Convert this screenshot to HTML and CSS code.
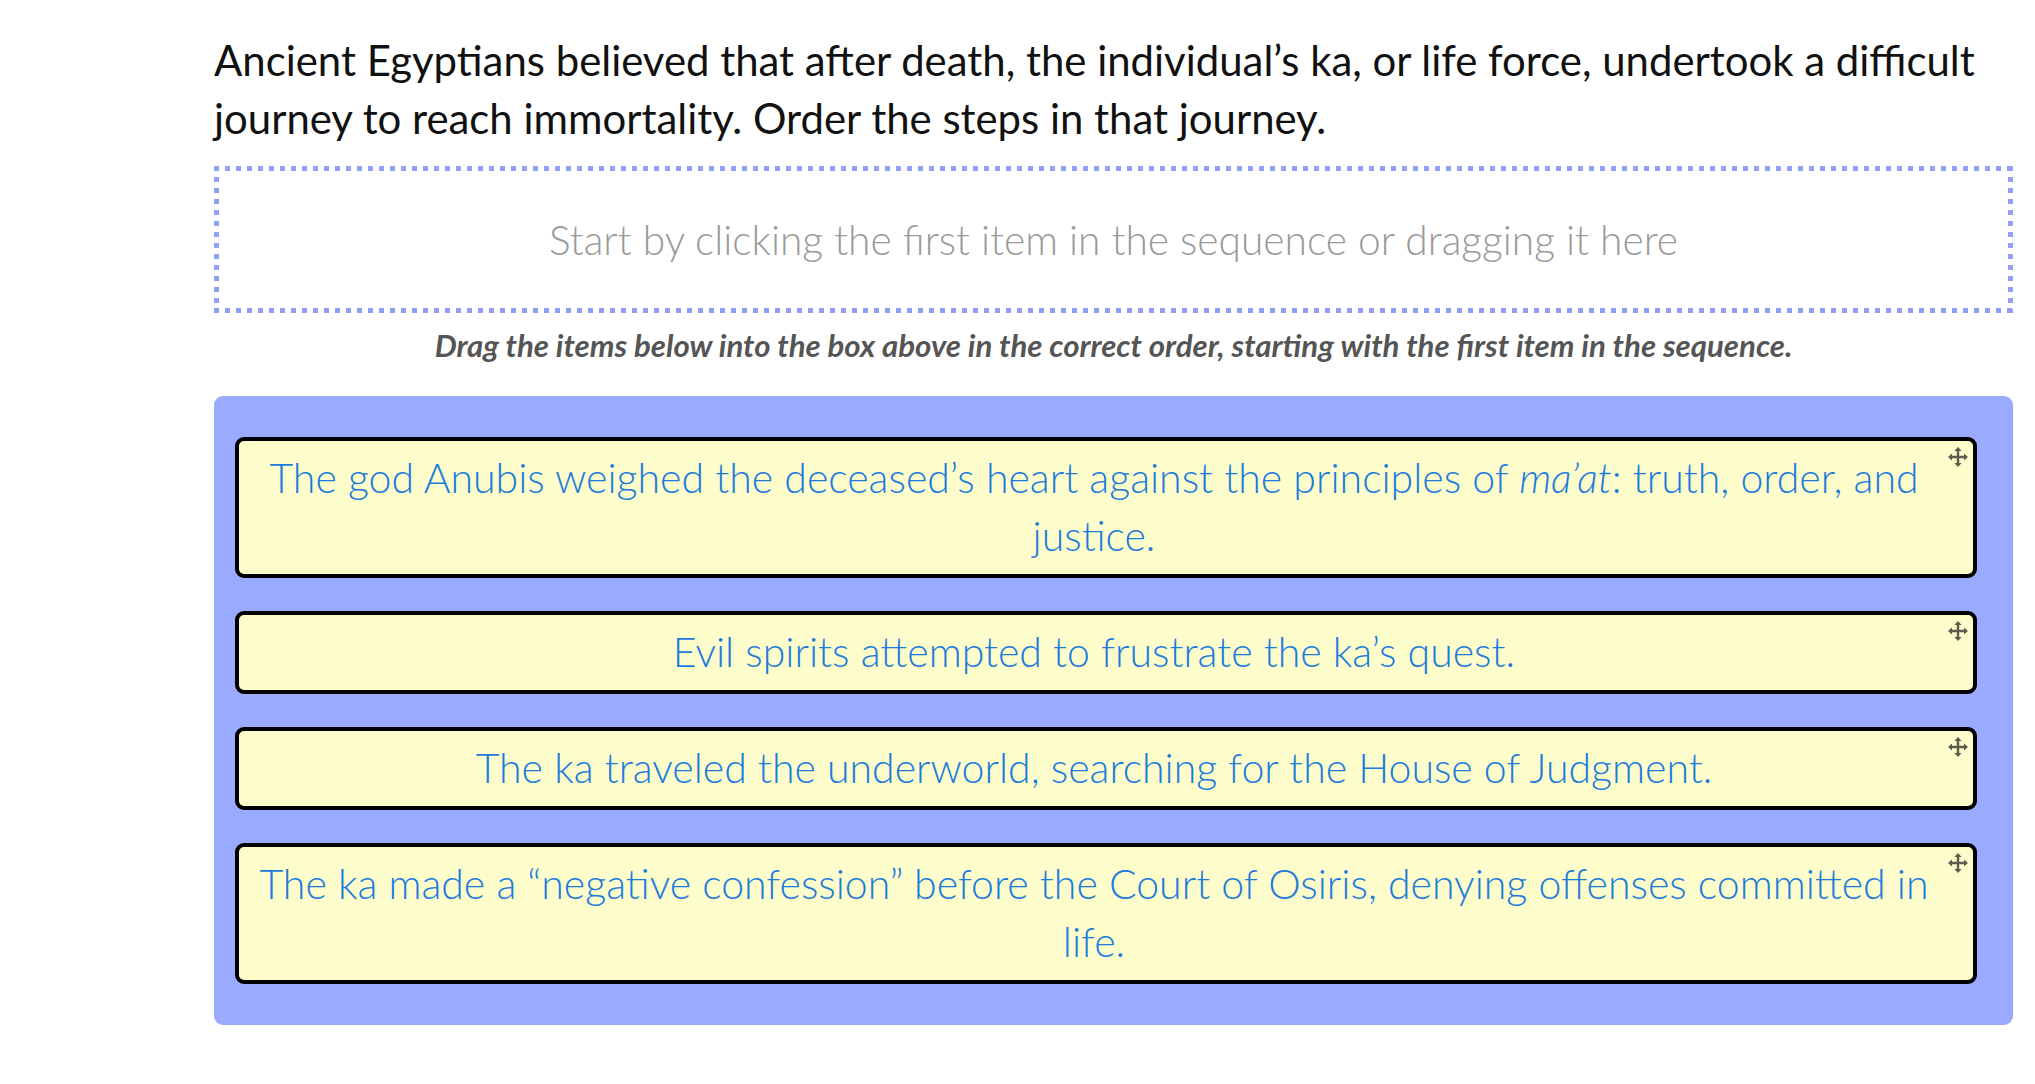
FILE: index.html
```html
<!DOCTYPE html>
<html lang="en">
<head>
<meta charset="utf-8">
<title>Order the steps</title>
<link rel="stylesheet" href="styles.css">
</head>
<body>
<main class="page">
  <p class="prompt">Ancient Egyptians believed that after death, the individual’s ka, or life force, undertook a difficult journey to reach immortality. Order the steps in that journey.</p>
  <div class="dropzone">
    <span class="placeholder">Start by clicking the first item in the sequence or dragging it here</span>
  </div>
  <p class="instructions">Drag the items below into the box above in the correct order, starting with the first item in the sequence.</p>
  <div class="pool">
    <div class="item">
      <span class="item-text">The god Anubis weighed the deceased’s heart against the principles of <em>ma’at</em>: truth, order, and justice.</span>
      <svg class="move" viewBox="0 0 20 20" aria-hidden="true"><path d="M10 3v14M3 10h14" stroke="currentColor" stroke-width="2.4" fill="none"/><path d="M10 0l3.6 4H6.4zM10 20l3.6-4H6.4zM0 10l4-3.6v7.2zM20 10l-4-3.6v7.2z" fill="currentColor"/></svg>
    </div>
    <div class="item">
      <span class="item-text">Evil spirits attempted to frustrate the ka’s quest.</span>
      <svg class="move" viewBox="0 0 20 20" aria-hidden="true"><path d="M10 3v14M3 10h14" stroke="currentColor" stroke-width="2.4" fill="none"/><path d="M10 0l3.6 4H6.4zM10 20l3.6-4H6.4zM0 10l4-3.6v7.2zM20 10l-4-3.6v7.2z" fill="currentColor"/></svg>
    </div>
    <div class="item">
      <span class="item-text">The ka traveled the underworld, searching for the House of Judgment.</span>
      <svg class="move" viewBox="0 0 20 20" aria-hidden="true"><path d="M10 3v14M3 10h14" stroke="currentColor" stroke-width="2.4" fill="none"/><path d="M10 0l3.6 4H6.4zM10 20l3.6-4H6.4zM0 10l4-3.6v7.2zM20 10l-4-3.6v7.2z" fill="currentColor"/></svg>
    </div>
    <div class="item">
      <span class="item-text">The ka made a “negative confession” before the Court of Osiris, denying offenses committed in life.</span>
      <svg class="move" viewBox="0 0 20 20" aria-hidden="true"><path d="M10 3v14M3 10h14" stroke="currentColor" stroke-width="2.4" fill="none"/><path d="M10 0l3.6 4H6.4zM10 20l3.6-4H6.4zM0 10l4-3.6v7.2zM20 10l-4-3.6v7.2z" fill="currentColor"/></svg>
    </div>
  </div>
</main>
</body>
</html>
```
FILE: styles.css
```css
html, body {
  margin: 0;
  padding: 0;
  background: #ffffff;
}

body {
  font-family: "Lato", "Open Sans", sans-serif;
}

.page {
  padding: 31px 22px 40px 214px;
}

.prompt {
  margin: 0;
  font-size: 41.9px;
  line-height: 58px;
  font-weight: 400;
  color: #111111;
}

.dropzone {
  margin-top: 19px;
  height: 147px;
  box-sizing: border-box;
  display: flex;
  align-items: center;
  justify-content: center;
  background:
    repeating-linear-gradient(90deg, #929ff6 0 5px, transparent 5px 11px) left top / 100% 5px no-repeat,
    repeating-linear-gradient(90deg, #929ff6 0 5px, transparent 5px 11px) left bottom / 100% 5px no-repeat,
    repeating-linear-gradient(180deg, #929ff6 0 5px, transparent 5px 11px) left top / 5px 100% no-repeat,
    repeating-linear-gradient(180deg, #929ff6 0 5px, transparent 5px 11px) right top / 5px 100% no-repeat;
}

.placeholder {
  font-size: 40.7px;
  font-weight: 300;
  line-height: 58px;
  color: #9a9a9a;
}

.instructions {
  margin: 12px 0 0;
  text-align: center;
  font-size: 31.2px;
  line-height: 40px;
  font-weight: 700;
  font-style: italic;
  color: #555555;
}

.pool {
  margin-top: 31px;
  background: #9aaaff;
  border-radius: 9px;
  padding: 41px 36px 41px 21px;
  display: flex;
  flex-direction: column;
  gap: 33px;
}

.item {
  position: relative;
  background: #fdfdcc;
  border: 4px solid #000000;
  border-radius: 9px;
  padding: 8px 40px 9px 16px;
  text-align: center;
  font-size: 41px;
  font-weight: 300;
  line-height: 58px;
  color: #1b7bdc;
}

.item-text em {
  font-style: italic;
}

.move {
  position: absolute;
  top: 6px;
  right: 5px;
  width: 20px;
  height: 20px;
  color: #5b5b4e;
}
```
